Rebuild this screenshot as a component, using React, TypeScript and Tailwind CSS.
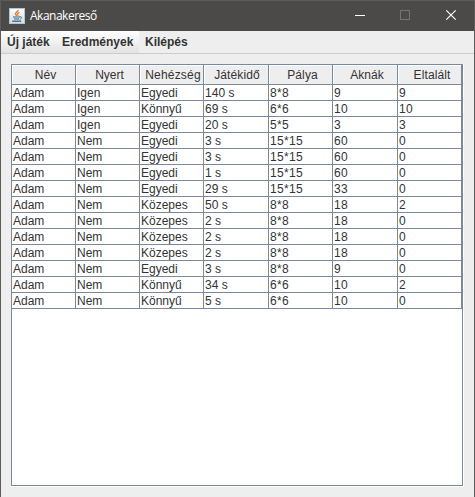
const columns = [
  { name: 'Név', style: 'pl-[4px]' },
  { name: 'Nyert', style: 'pl-[4px]' },
  { name: 'Nehézség', style: 'pl-[3px] tracking-[0.2px]' },
  { name: 'Játékidő', style: 'pl-[2px] tracking-[0.1px]' },
  { name: 'Pálya', style: 'pl-[4px] tracking-[0.1px]' },
  { name: 'Aknák', style: 'pl-[4px]' },
  { name: 'Eltalált', style: 'pl-[5px] tracking-[0.1px]' },
];

const rows = [
  ['Adam', 'Igen', 'Egyedi', '140 s', '8*8', '9', '9'],
  ['Adam', 'Igen', 'Könnyű', '69 s', '6*6', '10', '10'],
  ['Adam', 'Igen', 'Egyedi', '20 s', '5*5', '3', '3'],
  ['Adam', 'Nem', 'Egyedi', '3 s', '15*15', '60', '0'],
  ['Adam', 'Nem', 'Egyedi', '3 s', '15*15', '60', '0'],
  ['Adam', 'Nem', 'Egyedi', '1 s', '15*15', '60', '0'],
  ['Adam', 'Nem', 'Egyedi', '29 s', '15*15', '33', '0'],
  ['Adam', 'Nem', 'Közepes', '50 s', '8*8', '18', '2'],
  ['Adam', 'Nem', 'Közepes', '2 s', '8*8', '18', '0'],
  ['Adam', 'Nem', 'Közepes', '2 s', '8*8', '18', '0'],
  ['Adam', 'Nem', 'Közepes', '2 s', '8*8', '18', '0'],
  ['Adam', 'Nem', 'Egyedi', '3 s', '8*8', '9', '0'],
  ['Adam', 'Nem', 'Könnyű', '34 s', '6*6', '10', '2'],
  ['Adam', 'Nem', 'Könnyű', '5 s', '6*6', '10', '0'],
];

const grid = 'grid grid-cols-[64px_64px_64px_65px_64px_65px_64px]';

function JavaIcon() {
  return (
    <svg width="16" height="16" viewBox="0 0 16 16" fill="none">
      <defs>
        <linearGradient id="tile" x1="0" y1="0" x2="0" y2="1">
          <stop offset="0" stopColor="#ffffff" />
          <stop offset="1" stopColor="#cfdce5" />
        </linearGradient>
      </defs>
      <rect x="0.5" y="0.5" width="15" height="15" fill="url(#tile)" stroke="#b4c6d3" />
      <path d="M9 2C9.300 3.700 6 4.400 6.500 6c.2.700 1 1 1.100 1.800" stroke="#e8792b" strokeWidth="1.500" />
      <path d="M10.500 4.300C8.700 5 8.200 5.700 8.800 6.500c.4.500.2 1-.2 1.400" stroke="#e8792b" strokeWidth="1.200" />
      <path d="M4 9h7M5 11h5" stroke="#38617f" strokeWidth="1.200" />
      <path d="M10.800 8.800c2.600-.6 2.300 2-.2 2.500" stroke="#4b7490" />
      <path d="M3.200 13.200h9" stroke="#38617f" strokeWidth="1.300" />
    </svg>
  );
}

function TitleBar() {
  return (
    <header className="flex h-[30px] shrink-0 items-center bg-[#4c4a48] pl-2 text-white">
      <JavaIcon />
      <span className="ml-[5px] font-['Open_Sans',sans-serif] text-[12px] leading-4 tracking-[-0.5px]">Akanakereső</span>
      <div className="ml-auto flex h-full items-center">
        <svg width="119" height="30" viewBox="355 1 119 30" fill="none" shapeRendering="crispEdges">
          <path d="M355 15.500h10" stroke="#fff" />
          <rect x="400.500" y="10.500" width="9" height="9" stroke="#767472" />
          <path d="M446.300 10.300l9.400 9.400M455.700 10.300l-9.400 9.400" stroke="#fff" strokeWidth="1.200" shapeRendering="auto" />
        </svg>
      </div>
    </header>
  );
}

function MenuBar() {
  return (
    <nav className="flex h-[23px] shrink-0 border-b border-[#cccccc] bg-[#eeeeee] text-[12px] leading-[22px] font-bold">
      <div className="flex h-full w-[138px] bg-linear-to-b from-white to-[#e2e2e2] pl-[6px]">
        <span className="w-[55px] whitespace-nowrap">Új játék</span>
        <span className="whitespace-nowrap">Eredmények</span>
      </div>
      <span className="pl-[6px]">Kilépés</span>
    </nav>
  );
}

function cellTracking(column: number) {
  if (column === 3) return 'tracking-[0.05px]';
  return column > 3 ? 'tracking-[0.3px]' : '';
}

function ScoreTable() {
  return (
    <div className="border-r border-b border-white">
      <div className="h-[422px] w-[452px] border border-[#7a8a99] bg-white text-[12px]">
        <div className={grid}>
          {columns.map(({ name, style }) => (
            <div key={name} className="flex h-5 justify-center border-r border-b border-[#7a8a99] bg-[#eeeeee] leading-[21px] whitespace-nowrap shadow-[inset_1px_1px_0_#fff]">
              <span className={style}>{name}</span>
            </div>
          ))}
        </div>
        {rows.map((row, i) => (
          <div key={i} className={grid}>
            {row.map((value, j) => (
              <div
                key={j}
                className={`h-4 border-r border-b border-[#7a8a99] pl-px leading-[17px] whitespace-nowrap ${cellTracking(j)}`}
              >
                {value}
              </div>
            ))}
          </div>
        ))}
      </div>
    </div>
  );
}

export default function App() {
  return (
    <div className="flex h-[497px] w-[475px] flex-col border-x border-t border-[#5d5c5a] bg-[#eeeeee] font-['Liberation_Sans',Arial,sans-serif] text-[#333333]">
      <TitleBar />
      <MenuBar />
      <main className="flex flex-1 items-start pt-[10px] pl-[10px]">
        <ScoreTable />
      </main>
    </div>
  );
}
